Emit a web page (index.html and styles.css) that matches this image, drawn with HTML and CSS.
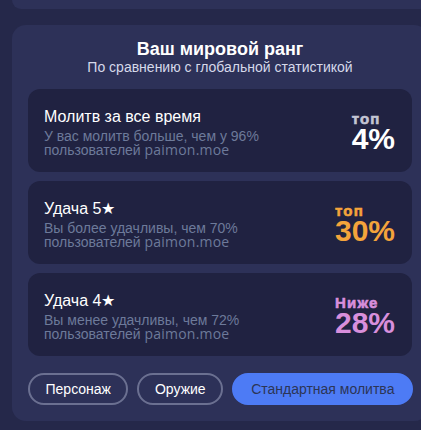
FILE: index.html
```html
<!DOCTYPE html>
<html lang="ru">
<head>
<meta charset="utf-8">
<link rel="stylesheet" href="styles.css">
</head>
<body>
<div class="page">
  <div class="prev-card"></div>
  <section class="card">
    <header class="head">
      <h2 class="title">Ваш мировой ранг</h2>
      <p class="subtitle">По сравнению с глобальной статистикой</p>
    </header>
    <div class="list">
      <div class="item">
        <div class="info">
          <div class="label">Молитв за все время</div>
          <div class="desc">У вас молитв больше, чем у 96%<br>пользователей <span class="site">paimon.moe</span></div>
        </div>
        <div class="rank rank-white">
          <div class="rank-word">топ</div>
          <div class="rank-num">4%</div>
        </div>
      </div>
      <div class="item">
        <div class="info">
          <div class="label">Удача 5★</div>
          <div class="desc">Вы более удачливы, чем 70%<br>пользователей <span class="site">paimon.moe</span></div>
        </div>
        <div class="rank rank-gold">
          <div class="rank-word">топ</div>
          <div class="rank-num">30%</div>
        </div>
      </div>
      <div class="item">
        <div class="info">
          <div class="label">Удача 4★</div>
          <div class="desc">Вы менее удачливы, чем 72%<br>пользователей <span class="site">paimon.moe</span></div>
        </div>
        <div class="rank rank-purple">
          <div class="rank-word">Ниже</div>
          <div class="rank-num">28%</div>
        </div>
      </div>
    </div>
    <div class="tabs">
      <button class="tab">Персонаж</button>
      <button class="tab">Оружие</button>
      <button class="tab tab-active">Стандартная молитва</button>
    </div>
  </section>
</div>
</body>
</html>
```

FILE: styles.css
```css
html, body {
  margin: 0;
  padding: 0;
  overflow: hidden;
}
body {
  width: 421px;
  height: 430px;
  background: #25284a;
  font-family: "Liberation Sans", Arial, sans-serif;
  color: #fff;
}
.page {
  display: flex;
  flex-direction: column;
  gap: 16px;
  padding-left: 12px;
}
.prev-card {
  width: 416px;
  height: 9px;
  background: #2d3158;
  border-radius: 0 0 12px 12px;
}
.card {
  width: 416px;
  box-sizing: border-box;
  background: #2d3158;
  border-radius: 14px;
  padding: 14px 16px 16px;
  display: flex;
  flex-direction: column;
}
.head {
  text-align: center;
  margin-bottom: 14px;
}
.title {
  margin: 0;
  font-size: 18px;
  line-height: 20px;
  font-weight: 700;
}
.subtitle {
  margin: 0;
  font-size: 14px;
  line-height: 16px;
  color: #d6d9ea;
}
.list {
  display: flex;
  flex-direction: column;
  gap: 9px;
}
.item {
  height: 83px;
  box-sizing: border-box;
  background: #202241;
  border-radius: 12px;
  padding: 2px 17px 0 16px;
  display: flex;
  align-items: center;
  justify-content: space-between;
}
.label {
  font-size: 16px;
  line-height: 19px;
  margin-bottom: 3px;
}
.desc {
  font-size: 14px;
  line-height: 14px;
  color: #6d7a9a;
}
.site {
  font-family: "Open Sans", "Liberation Sans", sans-serif;
  letter-spacing: 0.2px;
}
.rank {
  display: flex;
  flex-direction: column;
  align-items: flex-start;
  font-weight: 700;
}
.rank-word {
  font-size: 15px;
  line-height: 13px;
  letter-spacing: 1.2px;
  -webkit-text-stroke: 0.6px currentColor;
}
.rank-num {
  font-size: 30px;
  line-height: 27px;
}
.rank-white .rank-word { color: #c3c5d3; }
.rank-white .rank-num { color: #ffffff; }
.rank-gold { color: #f4a43b; }
.rank-purple { color: #d88fdc; }
.tabs {
  display: flex;
  gap: 9px;
  margin-top: 17px;
}
.tab {
  flex: none;
  height: 32px;
  padding: 0 15.5px;
  border: 2px solid #6b7091;
  border-radius: 16px;
  background: transparent;
  color: #fff;
  font-family: "Liberation Sans", Arial, sans-serif;
  font-size: 14px;
  white-space: nowrap;
}
.tab-active {
  border-color: #4d7bf5;
  background: #4d7bf5;
  color: #2c3556;
  padding: 0 17px;
}
```
